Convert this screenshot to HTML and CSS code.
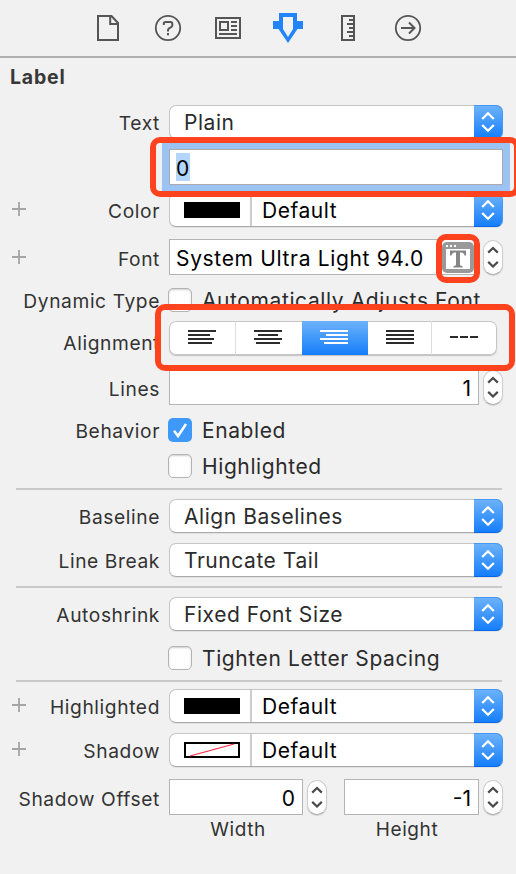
FILE: index.html
```html
<!DOCTYPE html>
<html lang="en">
<head>
<meta charset="utf-8">
<title>Label Inspector</title>
<link rel="stylesheet" href="styles.css">
</head>
<body>
<svg class="defs" width="0" height="0">
  <symbol id="updown" viewBox="0 0 14 20"><path d="M1.2 7 7 1.3 12.8 7M1.2 13 7 18.7 12.8 13" fill="none" stroke="currentColor" stroke-width="2.3"/></symbol>
  <symbol id="step" viewBox="0 0 12 22"><path d="M1.2 6.6 6 2 10.8 6.6M1.2 15.9 6 20.5 10.8 15.9" fill="none" stroke="currentColor" stroke-width="2.2"/></symbol>
  <symbol id="plus" viewBox="0 0 14 14"><path d="M7 0v14M0 7h14" stroke="#a5a5a5" stroke-width="1.8"/></symbol>
</svg>
<div class="inspector">
  <nav class="tabs">
    <svg width="24" height="28" viewBox="0 0 24 28"><path d="M2 2h13.5L22 9v17H2zM14.2 3v7H21" fill="none" stroke="#555" stroke-width="2"/></svg>
    <svg width="28" height="28" viewBox="0 0 28 28"><circle cx="14" cy="14" r="12.2" fill="none" stroke="#555" stroke-width="1.8"/><path d="M9.8 11V9.6q0-1.7 1.9-1.7h4.7q1.9 0 1.9 1.8v1.6q0 1.1-1 1.7l-2.2 1.3q-1.1.7-1.1 2v1.2M14 19v2.3" fill="none" stroke="#555" stroke-width="2"/></svg>
    <svg width="28" height="28" viewBox="0 0 28 28"><path d="M2 4h24v20H2zM6 8h8v8H6zM17 8h6M17 12h6M17 16h6M5 20h18" fill="none" stroke="#555" stroke-width="2"/></svg>
    <svg width="30" height="32" viewBox="0 0 30 32"><path fill="#2384fa" fill-rule="evenodd" d="M6 1h18v8h6v8h-5.5L15 31 5.500 17H0V9h6zM10 5v12l5 8 5-8V5z"/></svg>
    <svg width="16" height="28" viewBox="0 0 16 28"><path d="M2 2h12v24H2zM9 6h5M7 10h7M9 14h5M7 18h7M9 22h5" fill="none" stroke="#555" stroke-width="2"/></svg>
    <svg width="28" height="28" viewBox="0 0 28 28"><circle cx="14" cy="14" r="12.2" fill="none" stroke="#555" stroke-width="1.8"/><path d="M7 14h13M15 8.500 20.500 14 15 19.500" fill="none" stroke="#555" stroke-width="2"/></svg>
  </nav>
  <h1 class="title">Label</h1>

  <div class="row text-row">
    <label class="name">Text</label>
    <div class="select"><span class="value">Plain</span><span class="arrows"><svg><use href="#updown"/></svg></span></div>
  </div>
  <div class="row tall content-row">
    <div class="name"></div>
    <div class="field focused"><span class="selected">0</span></div>
    <div class="mark mark-content"></div>
  </div>
  <div class="row color-row">
    <svg class="plus"><use href="#plus"/></svg><label class="name">Color</label>
    <div class="select well"><span class="swatch-cell"><i class="swatch"></i></span><span class="value">Default</span><span class="arrows"><svg><use href="#updown"/></svg></span></div>
  </div>
  <div class="row tall font-row">
    <svg class="plus"><use href="#plus"/></svg><label class="name">Font</label>
    <div class="field font-field"><span class="font-name">System Ultra Light 94.0</span>
      <span class="font-button"><svg width="32" height="31" viewBox="0 0 32 31"><rect width="32" height="31" rx="5" fill="#999"/><path d="M4 7h24v20H4z" fill="#fff"/><path d="M4 3h2v2H4zM8 3h2v2H8zM12 3h2v2h-2z" fill="#fff"/><path d="M8 8.500h16v5h-1.500q-.6-3-3.500-3h-1v12q0 1.600 2.500 1.600v1.400h-9v-1.400q2.500 0 2.500-1.600v-12h-1q-2.900 0-3.500 3H8z" fill="#858585"/></svg></span>
    </div>
    <span class="stepper"><svg><use href="#step"/></svg></span>
    <div class="mark mark-font"></div>
  </div>
  <div class="row check-row dynamic-row">
    <label class="name">Dynamic Type</label><span class="check"></span><span class="check-text auto">Automatically Adjusts Font</span>
  </div>
  <div class="row align-row">
    <label class="name">Alignment</label>
    <div class="segments">
      <span><svg viewBox="0 0 28 14"><path d="M0 1h28M0 5h22M0 9h26M0 13h24"/></svg></span>
      <span><svg viewBox="0 0 28 14"><path d="M0 1h28M4 5h20M0 9h28M2 13h24"/></svg></span>
      <span class="on"><svg viewBox="0 0 28 14"><path d="M0 1h28M6 5h22M0 9h28M4 13h24"/></svg></span>
      <span><svg viewBox="0 0 28 14"><path d="M0 1h28M0 5h28M0 9h28M0 13h28"/></svg></span>
      <span><svg viewBox="0 0 28 14"><path d="M0 7h8M10 7h8M20 7h8"/></svg></span>
    </div>
    <div class="mark mark-align"></div>
  </div>
  <div class="row tall lines-row">
    <label class="name">Lines</label><div class="field number">1</div><span class="stepper"><svg><use href="#step"/></svg></span>
  </div>
  <div class="row check-row behavior-row">
    <label class="name">Behavior</label><span class="check checked"><svg width="24" height="24" viewBox="0 0 24 24"><path d="M6 12.800 10 18 18 6" fill="none" stroke="#fff" stroke-width="2.500"/></svg></span><span class="check-text enabled">Enabled</span>
  </div>
  <div class="row check-row highlighted-row">
    <div class="name"></div><span class="check"></span><span class="check-text">Highlighted</span>
  </div>
  <hr>
  <div class="row baseline-row">
    <label class="name">Baseline</label>
    <div class="select"><span class="value">Align Baselines</span><span class="arrows"><svg><use href="#updown"/></svg></span></div>
  </div>
  <div class="row break-row">
    <label class="name">Line Break</label>
    <div class="select"><span class="value">Truncate Tail</span><span class="arrows"><svg><use href="#updown"/></svg></span></div>
  </div>
  <hr>
  <div class="row shrink-row">
    <label class="name">Autoshrink</label>
    <div class="select"><span class="value">Fixed Font Size</span><span class="arrows"><svg><use href="#updown"/></svg></span></div>
  </div>
  <div class="row check-row tighten-row">
    <div class="name"></div><span class="check"></span><span class="check-text">Tighten Letter Spacing</span>
  </div>
  <hr class="last">
  <div class="row hcolor-row">
    <svg class="plus"><use href="#plus"/></svg><label class="name">Highlighted</label>
    <div class="select well"><span class="swatch-cell"><i class="swatch"></i></span><span class="value">Default</span><span class="arrows"><svg><use href="#updown"/></svg></span></div>
  </div>
  <div class="row shadow-row">
    <svg class="plus"><use href="#plus"/></svg><label class="name">Shadow</label>
    <div class="select well"><span class="swatch-cell"><svg width="56" height="16" viewBox="0 0 56 16"><path d="M1 1h54v14H1z" fill="#fff" stroke="#000" stroke-width="2"/><path d="M6 14 50 2" stroke="#ff2743" stroke-width="1.200"/></svg></span><span class="value">Default</span><span class="arrows"><svg><use href="#updown"/></svg></span></div>
  </div>
  <div class="row tall offset-row">
    <label class="name">Shadow Offset</label>
    <div class="field number offset">0</div><span class="stepper first"><svg><use href="#step"/></svg></span>
    <div class="field number offset">-1</div><span class="stepper"><svg><use href="#step"/></svg></span>
  </div>
  <div class="captions"><span>Width</span><span>Height</span></div>
</div>
</body>
</html>
```
FILE: styles.css
```css
* { box-sizing: border-box; }
body { margin: 0; background: #f1f1f1; color: #2b2b2b; font-family: Inter, "Liberation Sans", sans-serif; overflow: hidden; }
.defs { position: absolute; }
.inspector { width: 516px; height: 874px; overflow: hidden; position: relative; }
.tabs { height: 58px; border-bottom: 2px solid #b0b0b0; display: grid; grid-template-columns: repeat(6, 60px); justify-content: center; align-items: center; justify-items: center; }
.tabs svg { display: block; }
.title { margin: 7px 0 0 10px; height: 25px; line-height: 24px; font-size: 19.5px; font-weight: 700; letter-spacing: 0.8px; color: #383838; }
.row { display: flex; align-items: center; height: 34px; margin-top: 10px; position: relative; }
.tall { height: 36px; }
.check-row { height: 24px; }
.name { flex: none; width: 160px; margin-right: 9px; text-align: right; font-size: 19.2px; letter-spacing: 0.6px; line-height: 24px; white-space: nowrap; color: #333; padding-top: 1px; }
.plus { flex: none; width: 14px; height: 14px; margin: -2px 0 0 12px; }
.plus + .name { width: 134px; }
.text-row { margin-top: 15px; }
.color-row { margin-top: 8px; }
.font-row { margin-top: 12px; }
.font-row .plus { margin-top: 0; }
.dynamic-row { margin-top: 13px; }
.align-row { margin-top: 9px; }
.align-row .name { padding-top: 9px; }
.lines-row { margin-top: 14px; }
.tall .name { padding-top: 3px; }
.behavior-row { margin-top: 13px; }
.highlighted-row { margin-top: 12px; }
.tighten-row { margin-top: 15px; }
.baseline-row, .shrink-row { margin-top: 9px; }
.hcolor-row { margin-top: 7px; }
.offset-row { margin-top: 12px; }

.select { display: flex; width: 334px; height: 34px; background: #fff; border: 1px solid #c5c5c5; border-bottom-color: #aaa; border-radius: 7px; box-shadow: 0 1px 1px #0001; font-size: 21px; letter-spacing: 0.55px; line-height: 33px; }
.value { flex: 1; padding-left: 14px; white-space: nowrap; }
.arrows { width: 29px; height: 34px; margin: -1px; border-radius: 0 7px 7px 0; background: linear-gradient(#6cb2fa, #167efb); border: 1px solid #439af8; border-left: 0; border-bottom-color: #0866e8; color: #fff; display: flex; align-items: center; justify-content: center; }
.arrows svg { width: 14px; height: 20px; }
.swatch-cell { flex: none; width: 82px; border-right: 2px solid #ccc; display: flex; align-items: center; padding-left: 14px; }
.swatch { width: 56px; height: 16px; background: #000; }
.well .value { padding-left: 10px; color: #000; }

.field { width: 334px; height: 36px; border: 1px solid #b4b4b4; background: #fff; font-size: 21px; line-height: 37px; color: #000; white-space: nowrap; }
.focused { box-shadow: 0 0 0 7px #9bc4f5; display: flex; align-items: center; padding-left: 6px; border-color: #aaa; }
.selected { background: #b2d6fc; line-height: 31px; height: 28px; width: 14px; }
.font-field { width: 310px; display: flex; align-items: center; padding-left: 6px; letter-spacing: 0.66px; }
.font-name { padding-top: 2px; }
.font-button { margin-left: auto; margin-right: 4px; width: 32px; height: 31px; }
.font-button svg { display: block; }
.number { width: 310px; text-align: right; padding-right: 7px; }
.offset { width: 134px; }
.stepper { width: 20px; height: 35px; margin-left: 4px; border-radius: 10px; border: 1px solid #ccc; border-bottom-color: #aaa; background: #fff; color: #4a4a4a; box-shadow: 0 1px 1px #0002; display: flex; align-items: center; justify-content: center; }
.stepper svg { width: 12px; height: 22px; flex: none; }
.stepper.first { margin-right: 17px; }
.stepper.first + .offset { width: 135px; }

.check { flex: none; width: 24px; height: 24px; margin-left: -1px; border: 1px solid #b4b4b4; border-radius: 5px; background: #fff; box-shadow: inset 0 1px 2px #0003; }
.checked { background: #3e99f8; border: 0; box-shadow: none; }
.checked svg { display: block; }
.check-text { margin-left: 10px; padding-top: 2px; font-size: 21px; letter-spacing: 0.6px; line-height: 26px; white-space: nowrap; }

.segments { display: grid; grid-template-columns: 67px 66px 66px 64px 65px; width: 328px; height: 34px; background: #fff; border-radius: 7px; box-shadow: inset 0 0 0 1px #c5c5c5, 0 1px 1px #0003; }
.segments span { display: flex; align-items: center; justify-content: center; padding-bottom: 2px; border-right: 1px solid #ddd; }
.segments span:nth-child(2) { border: 0; padding-right: 2px; }
.segments span:last-child { border: 0; padding-right: 1px; }
.segments svg { width: 28px; height: 14px; stroke: #2b2b2b; stroke-width: 2; }
.segments .on { background: linear-gradient(#6cb2fa, #167efb); border: 0; padding-right: 2px; }
.segments .on svg { stroke: #fff; }
hr { margin: 10px 14px 0 16px; border: 0; height: 2px; background: #c9c9c9; }
.break-row + hr { margin-top: 9px; }
.captions { display: flex; font-size: 19px; letter-spacing: 0.6px; line-height: 24px; padding-left: 169px; margin-top: 3px; color: #333; }
.captions span { width: 138px; text-align: center; }
.captions span + span { margin-left: 31px; }

.mark { position: absolute; border: 6px solid #ff431f; border-radius: 10px; z-index: 2; }
.mark-content { left: 150px; top: -12px; width: 370px; height: 60px; }
.mark-font { left: 436px; top: -5px; width: 44px; height: 49px; }
.mark-align { left: 155px; top: -17px; width: 360px; height: 67px; }
```
